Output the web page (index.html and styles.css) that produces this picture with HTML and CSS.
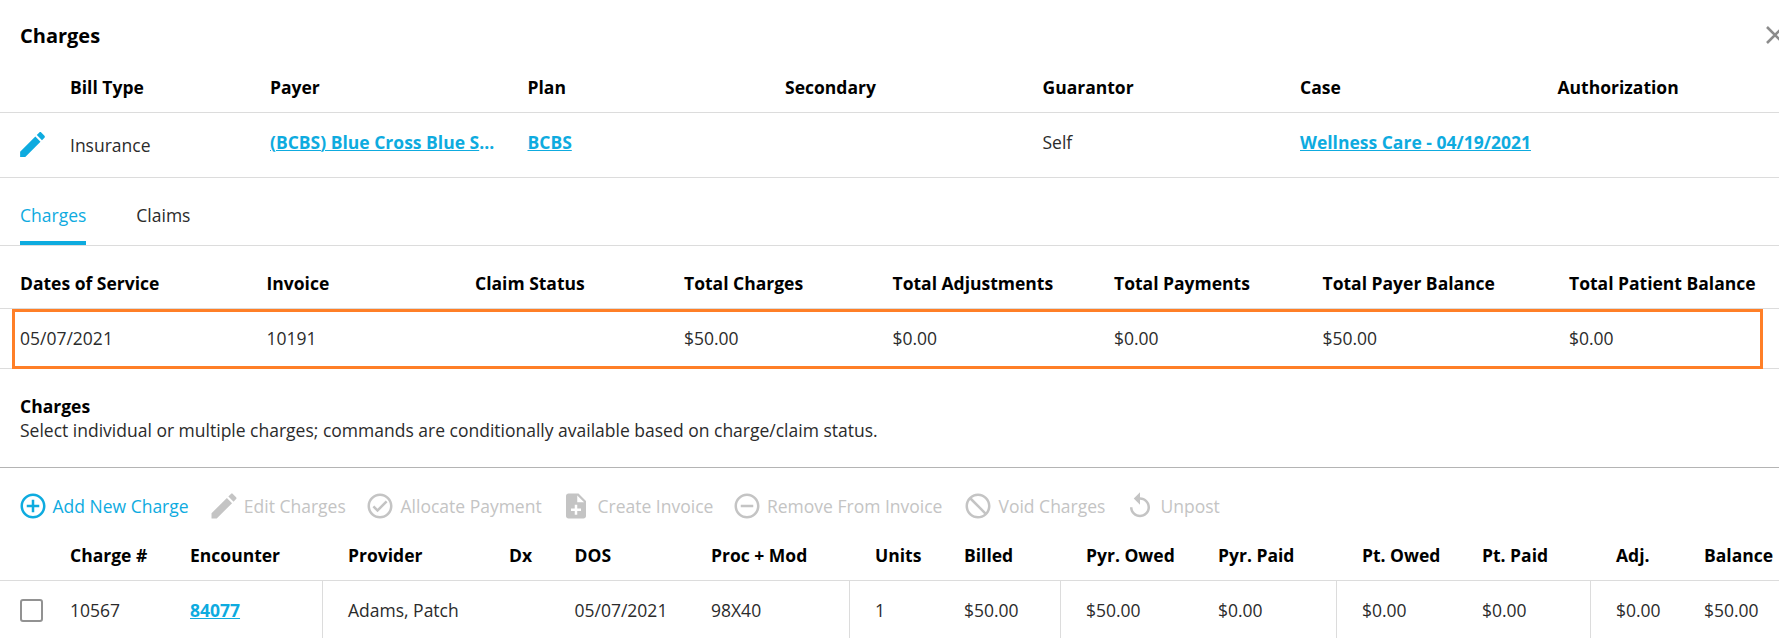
FILE: index.html
```html
<!DOCTYPE html>
<html lang="en">
<head>
<meta charset="utf-8">
<title>Charges</title>
<link rel="stylesheet" href="styles.css">
</head>
<body>
<main class="panel">
  <header class="panel-header">
    <h1 class="panel-title">Charges</h1>
    <svg class="close" viewBox="0 0 20 20"><path d="M2 2L18 18M18 2L2 18"/></svg>
  </header>

  <section class="billing">
    <div class="row billing-head">
      <span></span><span>Bill Type</span><span>Payer</span><span>Plan</span><span>Secondary</span><span>Guarantor</span><span>Case</span><span>Authorization</span>
    </div>
    <div class="row billing-body">
      <svg class="icon icon-edit" viewBox="0 0 24 24"><path d="M3 17.25V21h3.75L17.81 9.94l-3.75-3.75L3 17.25zM20.71 7.04c.39-.39.39-1.02 0-1.41l-2.34-2.34c-.39-.39-1.02-.39-1.41 0l-1.83 1.83 3.75 3.75 1.83-1.83z"/></svg>
      <span class="bill-type">Insurance</span>
      <span class="payer"><a class="link">(BCBS) Blue Cross Blue S</a><b class="dots">...</b></span>
      <span><a class="link">BCBS</a></span>
      <span></span>
      <span>Self</span>
      <span><a class="link">Wellness Care - 04/19/2021</a></span>
      <span></span>
    </div>
  </section>

  <nav class="tabs">
    <a class="tab tab-active">Charges</a>
    <a class="tab">Claims</a>
  </nav>

  <section class="totals">
    <div class="row totals-head">
      <span>Dates of Service</span><span>Invoice</span><span>Claim Status</span><span>Total Charges</span><span>Total Adjustments</span><span>Total Payments</span><span>Total Payer Balance</span><span>Total Patient Balance</span>
    </div>
    <div class="row totals-body">
      <span>05/07/2021</span><span>10191</span><span></span><span>$50.00</span><span>$0.00</span><span>$0.00</span><span>$50.00</span><span>$0.00</span>
      <div class="highlight"></div>
    </div>
  </section>

  <section class="intro">
    <h2 class="intro-title">Charges</h2>
    <p class="intro-text">Select individual or multiple charges; commands are conditionally available based on charge/claim status.</p>
  </section>

  <div class="toolbar">
    <a class="tool tool-on"><svg class="icon" viewBox="0 0 24 24"><path d="M13 7h-2v4H7v2h4v4h2v-4h4v-2h-4V7zm-1-5C6.480 2 2 6.480 2 12s4.480 10 10 10 10-4.480 10-10S17.520 2 12 2zm0 18c-4.410 0-8-3.590-8-8s3.590-8 8-8 8 3.590 8 8-3.590 8-8 8z"/></svg><span>Add New Charge</span></a>
    <a class="tool"><svg class="icon" viewBox="0 0 24 24"><path transform="translate(12 12) scale(1.11) translate(-12 -12)" d="M3 17.25V21h3.75L17.81 9.94l-3.75-3.75L3 17.25zM20.71 7.04c.39-.39.39-1.02 0-1.41l-2.34-2.34c-.39-.39-1.02-.39-1.41 0l-1.83 1.83 3.75 3.75 1.83-1.83z"/></svg><span>Edit Charges</span></a>
    <a class="tool"><svg class="icon" viewBox="0 0 24 24"><path d="M12 2C6.480 2 2 6.480 2 12s4.480 10 10 10 10-4.480 10-10S17.520 2 12 2zm0 18c-4.410 0-8-3.590-8-8s3.590-8 8-8 8 3.590 8 8-3.590 8-8 8zm4.590-12.420L10 14.170l-2.590-2.580L6 13l4 4 8-8-1.410-1.420z"/></svg><span>Allocate Payment</span></a>
    <a class="tool tool-invoice"><svg class="icon" viewBox="0 0 24 24"><path d="M14 2H6c-1.100 0-1.990.9-1.990 2L4 20c0 1.100.89 2 1.990 2H18c1.100 0 2-.9 2-2V8l-6-6zm2 14h-3v3h-2v-3H8v-2h3v-3h2v3h3v2zm-3-7V3.500L18.500 9H13z"/></svg><span>Create Invoice</span></a>
    <a class="tool"><svg class="icon" viewBox="0 0 24 24"><path d="M7 11v2h10v-2H7zm5-9C6.480 2 2 6.480 2 12s4.480 10 10 10 10-4.480 10-10S17.520 2 12 2zm0 18c-4.410 0-8-3.590-8-8s3.590-8 8-8 8 3.590 8 8-3.590 8-8 8z"/></svg><span>Remove From Invoice</span></a>
    <a class="tool"><svg class="icon" viewBox="0 0 24 24"><path d="M12 2C6.480 2 2 6.480 2 12s4.480 10 10 10 10-4.480 10-10S17.520 2 12 2zM4 12c0-4.420 3.580-8 8-8 1.850 0 3.550.63 4.900 1.690L5.690 16.900C4.630 15.550 4 13.850 4 12zm8 8c-1.850 0-3.550-.63-4.900-1.690L18.310 7.100C19.370 8.450 20 10.150 20 12c0 4.420-3.580 8-8 8z" transform="matrix(-1 0 0 1 24 0)"/></svg><span>Void Charges</span></a>
    <a class="tool"><svg class="icon" viewBox="0 0 24 24"><path d="M12 5V1L7 6l5 5V7c3.310 0 6 2.690 6 6s-2.690 6-6 6-6-2.690-6-6H4c0 4.420 3.580 8 8 8s8-3.580 8-8-3.580-8-8-8z"/></svg><span>Unpost</span></a>
  </div>

  <section class="charges">
    <div class="row charges-head">
      <span></span><span>Charge #</span><span>Encounter</span><span>Provider</span><span>Dx</span><span>DOS</span><span>Proc + Mod</span><span>Units</span><span>Billed</span><span>Pyr. Owed</span><span>Pyr. Paid</span><span>Pt. Owed</span><span>Pt. Paid</span><span>Adj.</span><span>Balance</span>
    </div>
    <div class="row charges-body">
      <span><i class="checkbox"></i></span><span>10567</span><span><a class="link">84077</a></span><span class="ruled">Adams, Patch</span><span></span><span>05/07/2021</span><span>98X40</span><span class="ruled">1</span><span>$50.00</span><span class="ruled">$50.00</span><span>$0.00</span><span class="ruled">$0.00</span><span>$0.00</span><span class="ruled">$0.00</span><span>$50.00</span>
    </div>
  </section>
</main>
</body>
</html>
```
FILE: styles.css
```css
* { box-sizing: border-box; }
body {
  margin: 0;
  background: #fff;
  color: #2b2b2b;
  font: 400 17.5px/24px "Open Sans", sans-serif;
  overflow: hidden;
}
.panel { width: 1779px; height: 638px; overflow: hidden; }
.panel-header {
  display: flex;
  justify-content: space-between;
  align-items: center;
  height: 70px;
  padding-left: 20px;
}
.panel-title { margin: 0; padding-top: 1px; font-size: 20px; font-weight: 700; color: #000; }
.close {
  width: 20px;
  height: 20px;
  margin-right: -6px;
  flex: none;
  fill: none;
  stroke: #8c8c8c;
  stroke-width: 2.6;
}
.row { display: grid; white-space: nowrap; border-bottom: 1px solid #dcdcdc; }
.billing .row { grid-template-columns: 50px 200px 257.5px 257.5px 257.5px 257.5px 257.5px 1fr; padding-left: 20px; }
.billing-head, .totals-head, .charges-head { font-weight: 700; color: #000; }
.billing-head { height: 43px; padding-top: 5px; }
.billing-body { height: 65px; padding-top: 17px; }
.icon { width: 30px; height: 30px; flex: none; fill: currentColor; }
.icon-edit { width: 33px; height: 33px; margin: -2px 0 0 -4px; color: #0eabdf; }
.bill-type { padding-top: 3px; }
.link { color: #0eabdf; font-weight: 700; text-decoration: underline; text-decoration-thickness: 1px; text-underline-offset: 1px; }
.dots { color: #0eabdf; font-weight: 700; }
.tabs { display: flex; gap: 50px; height: 68px; padding: 25px 20px 0; border-bottom: 1px solid #dcdcdc; }
.tab { height: 42px; }
.tab-active { color: #0eabdf; border-bottom: 4px solid #0eabdf; }
.totals .row { grid-template-columns: 246.5px 208.5px 209px 208.5px 221.5px 208.5px 246.5px 1fr; padding-left: 20px; }
.totals-head { height: 63px; padding-top: 25px; }
.totals-body { position: relative; height: 60px; padding-top: 17px; }
.highlight { position: absolute; left: 12px; top: 0; width: 1751px; height: 60px; border: 3px solid #ff7f27; }
.intro { height: 99px; padding: 25px 20px 0; border-bottom: 1px solid #b4b4b4; }
.intro-title { margin: 0; font-size: 17.5px; font-weight: 700; line-height: 24px; color: #000; }
.intro-text { margin: 0; }
.toolbar { display: grid; grid-template-columns: 191.3px 156.7px 196px 170.5px 231.5px 162px 1fr; height: 75px; padding: 23px 0 0 17.5px; white-space: nowrap; color: #c4c4c4; }
.tool { display: flex; gap: 5px; height: 30px; line-height: 31px; }
.tool-invoice { gap: 6px; }
.tool-on { color: #0eabdf; }
.charges .row { grid-template-columns: 50px 120px 132px 187px 65.5px 136.5px 138px 115px 96px 158px 118px 146px 108px 114px 1fr; padding-left: 20px; }
.charges-head { height: 38px; }
.charges-head > :nth-child(4), .charges-head > :nth-child(8), .charges-head > :nth-child(10), .charges-head > :nth-child(12), .charges-head > :nth-child(14) { padding-left: 26px; }
.charges-body { height: 90px; border-bottom: 0; }
.charges-body > span { padding-top: 17px; }
.charges-body > .ruled { border-left: 1px solid #dcdcdc; padding-left: 25px; }
.checkbox { display: block; width: 23px; height: 23px; margin-top: 1px; border: 2px solid #929292; border-radius: 3px; }
```
